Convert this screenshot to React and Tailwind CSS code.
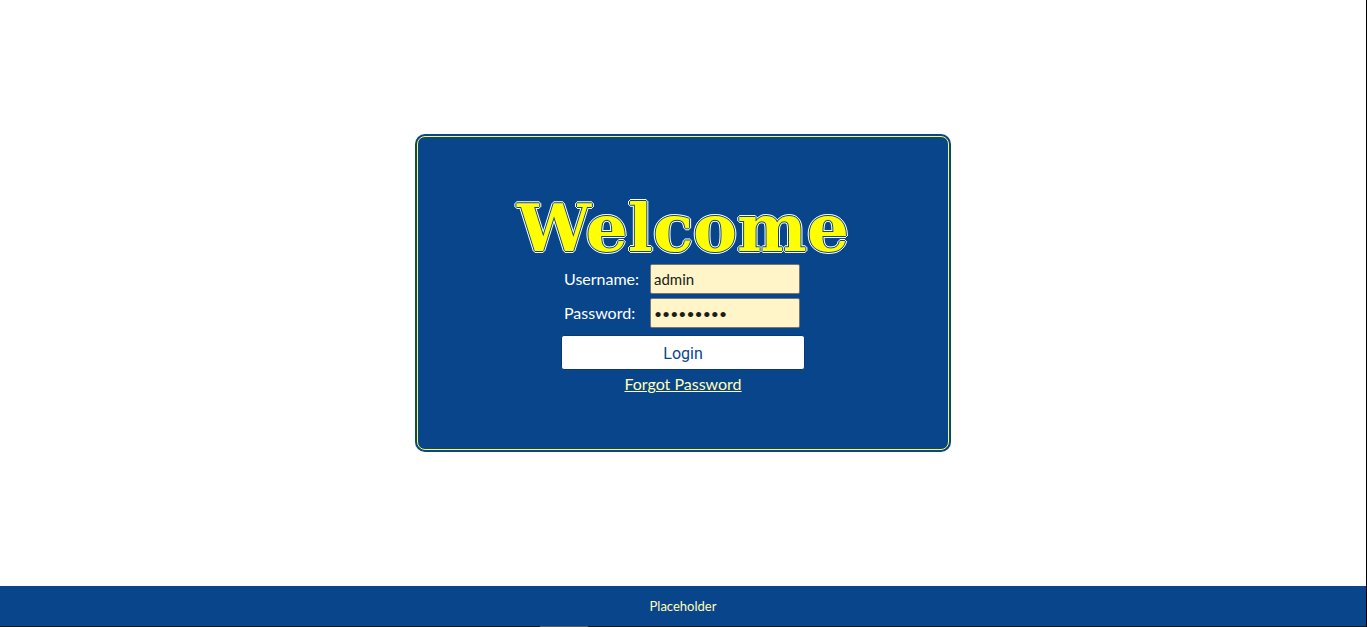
import React from "react";

const outline =
  "[text-shadow:1px_0_#09458b,-1px_0_#09458b,0_1px_#09458b,0_-1px_#09458b,2px_0_#fff,-2px_0_#fff,0_2px_#fff,0_-2px_#fff,1px_1px_#fff,-1px_1px_#fff,1px_-1px_#fff,-1px_-1px_#fff]";

const field =
  "h-[30px] w-[150px] rounded-xs border border-[#767676] bg-[#fff5c8] px-[3px] text-[#201d18] outline-none";

function LoginForm() {
  return (
    <form className="flex w-[244px] flex-col items-center" onSubmit={(e) => e.preventDefault()}>
      <div className="grid w-full grid-cols-[84px_150px] items-center gap-x-0.5 gap-y-1 px-[3px]">
        <label htmlFor="username" className="text-white">Username:</label>
        <input id="username" type="text" defaultValue="admin" className={`${field} text-[15px]`} />
        <label htmlFor="password" className="text-white">Password:</label>
        <input id="password" type="password" defaultValue="adminpass" className={`${field} text-sm`} />
      </div>
      <button
        type="submit"
        className="mt-[7px] h-[35px] w-full rounded-[3px] border border-[#073a75] bg-white pt-0.5 font-[Roboto,sans-serif] text-base text-[#09458b]"
      >
        Login
      </button>
      <a href="#forgot" className="mt-0.5 text-[#ffffb8] underline">Forgot Password</a>
    </form>
  );
}

export default function App() {
  return (
    <div className="flex min-h-screen flex-col border-r border-black bg-white font-[Lato,sans-serif] text-base">
      <main className="flex grow items-center justify-center">
        <section className="w-[536px] max-w-full rounded-[10px] bg-[#09458b] p-0.5">
          <div className="flex flex-col items-center rounded-lg border border-[#ffff32] pt-[55px] pb-[53px]">
            <h1
              className={`font-['DejaVu_Serif','DejaVu_Sans',serif] text-[66px] leading-[72px] font-bold text-[#ffff00] ${outline}`}
            >
              Welcome
            </h1>
            <LoginForm />
          </div>
        </section>
      </main>
      <footer className="flex h-10 items-center justify-center bg-[#09458b] pt-0.5 text-[13px] text-[#ffffb8]">
        Placeholder
      </footer>
      <div className="h-px bg-[#1a1a1a] pl-[540px]">
        <div className="h-px w-12 bg-[#5c5c5c]" />
      </div>
    </div>
  );
}
